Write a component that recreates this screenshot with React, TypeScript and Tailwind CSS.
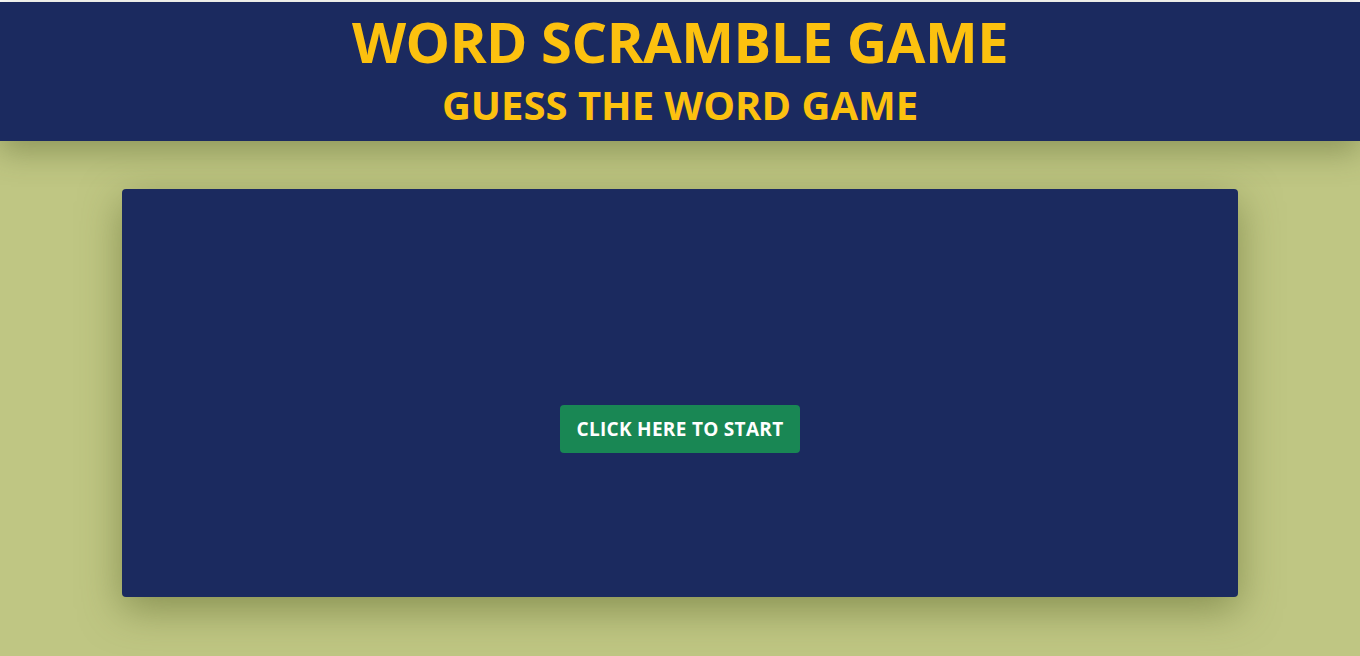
export default function App() {
  return (
    <div className="min-h-screen bg-[#bfc683] font-['Open_Sans','Noto_Sans',sans-serif]" style={{ minHeight: 656 }}>
      <div className="h-[2px] bg-white" />
      <header className="h-[139px] bg-[#1b2a5f] text-[#fcc10f] text-center flex flex-col items-center shadow-[0_10px_30px_rgba(80,90,40,0.45)] relative z-10">
        <h1 className="mt-[9px] text-[56px] leading-[60px] font-bold tracking-[-0.5px]">WORD SCRAMBLE GAME</h1>
        <h2 className="mt-[12px] text-[40px] leading-[44px] font-bold">GUESS THE WORD GAME</h2>
      </header>
      <main className="pt-[48px] pb-[59px]">
        <div className="mx-auto w-[1116px] h-[408px] bg-[#1b2a5f] rounded-[4px] shadow-[0_12px_40px_rgba(90,100,40,0.55)] flex flex-col items-center pt-[216px]">
          <button className="h-[48px] w-[240px] bg-[#198754] rounded-[4px] text-white text-[19px] font-bold tracking-[0.3px]">
            CLICK HERE TO START
          </button>
        </div>
      </main>
    </div>
  )
}
